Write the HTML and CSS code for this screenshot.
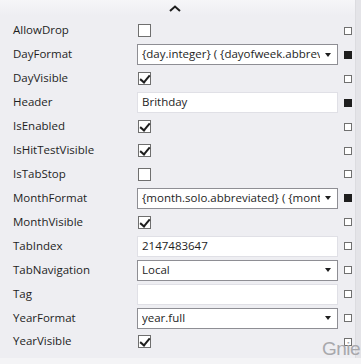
FILE: index.html
```html
<!DOCTYPE html>
<html>
<head>
<meta charset="utf-8">
<link rel="stylesheet" href="styles.css">
</head>
<body>
<div class="frame">
  <div class="panel">
    <div class="top">
      <svg class="chev" width="12" height="7" viewBox="0 0 12 7"><path d="M1 6 L6 1.5 L11 6" fill="none" stroke="#1e1e1e" stroke-width="2"/></svg>
    </div>
    <div class="grid">
      <div class="lbl">AllowDrop</div>
      <div class="val"><span class="cb"></span></div>
      <div class="mk"><span class="sq"></span></div>

      <div class="lbl">DayFormat</div>
      <div class="val"><div class="combo"><span class="txt">{day.integer} ( {dayofweek.abbreviated} )</span><span class="arr"></span></div></div>
      <div class="mk"><span class="sq on"></span></div>

      <div class="lbl">DayVisible</div>
      <div class="val"><span class="cb checked"></span></div>
      <div class="mk"><span class="sq"></span></div>

      <div class="lbl">Header</div>
      <div class="val"><div class="tb"><span class="txt">Brithday</span></div></div>
      <div class="mk"><span class="sq on"></span></div>

      <div class="lbl">IsEnabled</div>
      <div class="val"><span class="cb checked"></span></div>
      <div class="mk"><span class="sq"></span></div>

      <div class="lbl">IsHitTestVisible</div>
      <div class="val"><span class="cb checked"></span></div>
      <div class="mk"><span class="sq"></span></div>

      <div class="lbl">IsTabStop</div>
      <div class="val"><span class="cb"></span></div>
      <div class="mk"><span class="sq"></span></div>

      <div class="lbl">MonthFormat</div>
      <div class="val"><div class="combo"><span class="txt">{month.solo.abbreviated} ( {month.integer} )</span><span class="arr"></span></div></div>
      <div class="mk"><span class="sq on"></span></div>

      <div class="lbl">MonthVisible</div>
      <div class="val"><span class="cb checked"></span></div>
      <div class="mk"><span class="sq"></span></div>

      <div class="lbl">TabIndex</div>
      <div class="val"><div class="tb"><span class="txt">2147483647</span></div></div>
      <div class="mk"><span class="sq"></span></div>

      <div class="lbl">TabNavigation</div>
      <div class="val"><div class="combo"><span class="txt">Local</span><span class="arr"></span></div></div>
      <div class="mk"><span class="sq"></span></div>

      <div class="lbl">Tag</div>
      <div class="val"><div class="tb"><span class="txt"></span></div></div>
      <div class="mk"><span class="sq"></span></div>

      <div class="lbl">YearFormat</div>
      <div class="val"><div class="combo"><span class="txt">year.full</span><span class="arr"></span></div></div>
      <div class="mk"><span class="sq"></span></div>

      <div class="lbl">YearVisible</div>
      <div class="val"><span class="cb checked"></span></div>
      <div class="mk"><span class="sq"></span></div>
    </div>
    <div class="watermark">Gnie</div>
  </div>
  <div class="scroll"></div>
</div>
</body>
</html>
```
FILE: styles.css
```css
html, body {
  margin: 0;
  padding: 0;
}
body {
  width: 361px;
  height: 364px;
  overflow: hidden;
  background: #f4f4f6;
  font-family: "Open Sans", "Noto Sans", sans-serif;
  font-size: 11.5px;
  color: #1e1e1e;
}
.frame {
  display: flex;
  height: 358px;
}
.panel {
  position: relative;
  width: 355px;
  background: linear-gradient(#f6f6f8 0px, #eeeef2 16px, #eeeef2 100%);
}
.scroll {
  width: 6px;
  background: #e4e4e8;
  border-left: 1px solid #dcdce0;
}
.top {
  height: 19px;
  display: flex;
  justify-content: center;
  align-items: flex-start;
}
.chev {
  margin-top: 5px;
  margin-left: -6px;
}
.grid {
  display: grid;
  grid-template-columns: 124px 201px 17px;
  grid-auto-rows: 23.93px;
  padding-left: 13px;
}
.lbl {
  display: flex;
  align-items: center;
  white-space: nowrap;
  line-height: 16px;
  padding-bottom: 1px;
}
.val {
  display: flex;
  align-items: center;
}
.mk {
  display: flex;
  align-items: center;
  justify-content: center;
  padding-left: 2px;
}
.cb {
  width: 13px;
  height: 13px;
  box-sizing: border-box;
  border: 1px solid #6f6f6f;
  background: #fff;
  position: relative;
  margin-left: 1px;
}
.cb.checked::after {
  content: "";
  position: absolute;
  left: 3px;
  top: 0px;
  width: 4px;
  height: 8px;
  border-right: 2px solid #1e1e1e;
  border-bottom: 2px solid #1e1e1e;
  transform: rotate(40deg);
}
.combo, .tb {
  width: 201px;
  height: 21px;
  box-sizing: border-box;
  background: #fff;
  display: flex;
  align-items: center;
  padding-left: 4px;
  overflow: hidden;
}
.combo {
  border: 1px solid #8e8e94;
}
.tb {
  border: 1px solid #e0e0e6;
}
.txt {
  flex: 1;
  white-space: nowrap;
  overflow: hidden;
  line-height: 16px;
  height: 16px;
  padding-bottom: 1px;
}
.arr {
  width: 0;
  height: 0;
  border-left: 3.5px solid transparent;
  border-right: 3.5px solid transparent;
  border-top: 4px solid #1e1e1e;
  margin: 0 6px 0 5px;
}
.sq {
  width: 8px;
  height: 8px;
  box-sizing: border-box;
  border: 1px solid #707070;
  background: #fff;
}
.sq.on {
  background: #1e1e1e;
  border-color: #1e1e1e;
}
.watermark {
  position: absolute;
  left: 322px;
  top: 339px;
  font-family: "Liberation Sans", sans-serif;
  font-size: 19px;
  line-height: 20px;
  color: #a8a8ac;
  letter-spacing: -0.5px;
  white-space: nowrap;
}
```
